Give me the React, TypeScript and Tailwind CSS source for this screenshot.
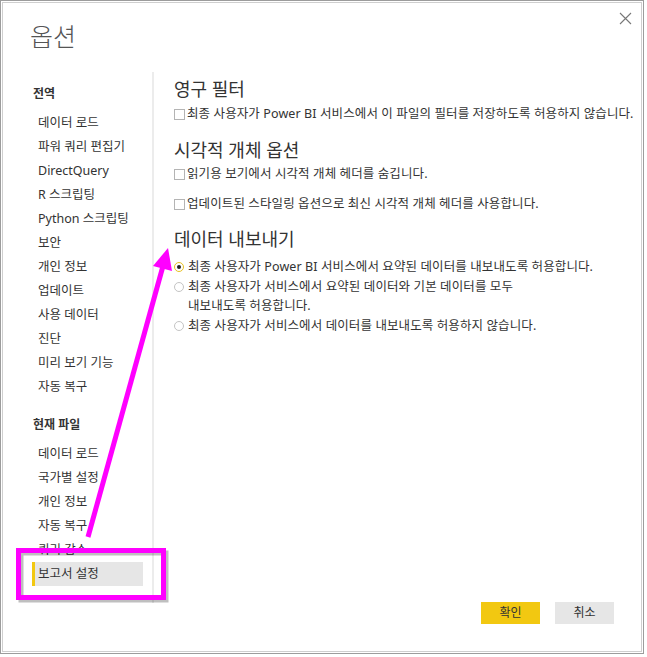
import React from 'react';

const globalItems = [
  '데이터 로드',
  '파워 쿼리 편집기',
  'DirectQuery',
  'R 스크립팅',
  'Python 스크립팅',
  '보안',
  '개인 정보',
  '업데이트',
  '사용 데이터',
  '진단',
  '미리 보기 기능',
  '자동 복구',
];

const fileItems = ['데이터 로드', '국가별 설정', '개인 정보', '자동 복구', '쿼리 감소', '보고서 설정'];

function NavItem({ label, active }: { label: string; active?: boolean }) {
  return (
    <div
      className={`h-6 flex items-center text-[12.5px] text-[#333] border-l-[3px] pl-[3px] ${
        active ? 'bg-[#e6e6e6] border-[#f2c811]' : 'border-transparent'
      }`}
    >
      {label}
    </div>
  );
}

function Checkbox({ label }: { label: string }) {
  return (
    <div className="flex items-center h-5 text-[12.5px] tracking-[0.1px] text-[#333]">
      <span className="w-[11px] h-[11px] border border-[#b4b4b4] bg-white mr-[2px] shrink-0" />
      {label}
    </div>
  );
}

function Radio({ children, checked }: { children: React.ReactNode; checked?: boolean }) {
  return (
    <div className="flex items-start text-[12.5px] tracking-[0.1px] text-[#333] leading-[19.5px]">
      <span
        className={`mt-[5px] w-[10px] h-[10px] rounded-full border flex items-center justify-center shrink-0 mr-[4px] ${
          checked ? 'border-[#e8c020]' : 'border-[#c4c4c4]'
        }`}
      >
        {checked && <span className="w-[4px] h-[4px] rounded-full bg-[#222]" />}
      </span>
      <div>{children}</div>
    </div>
  );
}

export default function App() {
  return (
    <div
      className="relative w-[647px] h-[657px] bg-white"
      style={{ fontFamily: '"Noto Sans", "Noto Sans CJK KR", sans-serif' }}
    >
      <div className="w-[644px] h-[654px] border border-[#9c9c9c] p-px">
        <div className="relative w-full h-full border border-[#cfcfcf] flex flex-col">
          <button className="absolute right-[8px] top-[7px] w-4 h-4 flex items-center justify-center">
            <svg width="13" height="13" viewBox="0 0 13 13" fill="none" stroke="#777" strokeWidth="1.1">
              <path d="M1 1 L12 12 M12 1 L1 12" />
            </svg>
          </button>

          <div className="pt-[16px] pl-[27px] text-[25px] leading-[34px] font-light text-[#555]">옵션</div>

          <div className="flex flex-1 mt-[19px]">
            <div className="w-[151px] pl-[29px] pr-[9px] border-r-2 border-[#ececec] mb-[48px]">
              <div className="h-6 flex items-center pl-[1px] text-[12px] font-bold text-[#333] mt-[10px] mb-[5px]">전역</div>
              {globalItems.map((label) => (
                <NavItem key={label} label={label} />
              ))}
              <div className="h-6 flex items-center pl-[1px] text-[12px] font-bold text-[#333] mt-[14px] mb-[5px]">
                현재 파일
              </div>
              {fileItems.map((label) => (
                <NavItem key={label} label={label} active={label === '보고서 설정'} />
              ))}
            </div>

            <div className="flex-1 pl-[20px] flex flex-col">
              <div className="text-[18px] leading-6 text-[#333] mt-[5px]">영구 필터</div>
              <div className="mt-[3px]">
                <Checkbox label="최종 사용자가 Power BI 서비스에서 이 파일의 필터를 저장하도록 허용하지 않습니다." />
              </div>

              <div className="text-[18px] leading-6 text-[#333] mt-[14px]">시각적 개체 옵션</div>
              <div className="mt-[2px] flex flex-col gap-[10px]">
                <Checkbox label="읽기용 보기에서 시각적 개체 헤더를 숨깁니다." />
                <Checkbox label="업데이트된 스타일링 옵션으로 최신 시각적 개체 헤더를 사용합니다." />
              </div>

              <div className="text-[18px] leading-6 text-[#333] mt-[13px]">데이터 내보내기</div>
              <div className="mt-[6px] flex flex-col">
                <Radio checked>최종 사용자가 Power BI 서비스에서 요약된 데이터를 내보내도록 허용합니다.</Radio>
                <Radio>
                  최종 사용자가 서비스에서 요약된 데이터와 기본 데이터를 모두
                  <br />
                  내보내도록 허용합니다.
                </Radio>
                <Radio>최종 사용자가 서비스에서 데이터를 내보내도록 허용하지 않습니다.</Radio>
              </div>

              <div className="mt-auto mb-[27px] mr-[27px] flex justify-end gap-[15px]">
                <button className="w-[59px] h-[22px] bg-[#f2c811] text-[12px] text-[#333]">확인</button>
                <button className="w-[59px] h-[22px] bg-[#e6e6e6] text-[12px] text-[#333]">취소</button>
              </div>
            </div>
          </div>
        </div>
      </div>

      <svg className="absolute inset-0 pointer-events-none" width="647" height="657" viewBox="0 0 647 657">
        <rect x="21" y="553" width="145" height="47" fill="none" stroke="#000" strokeOpacity="0.25" strokeWidth="5" />
        <rect x="18.5" y="550.5" width="145" height="47" fill="none" stroke="#ff00ff" strokeWidth="5" />
        <line x1="88" y1="537" x2="163" y2="266" stroke="#ff00ff" strokeWidth="5" />
        <polygon points="168,248 172,271 153,266" fill="#ff00ff" />
      </svg>
    </div>
  );
}
